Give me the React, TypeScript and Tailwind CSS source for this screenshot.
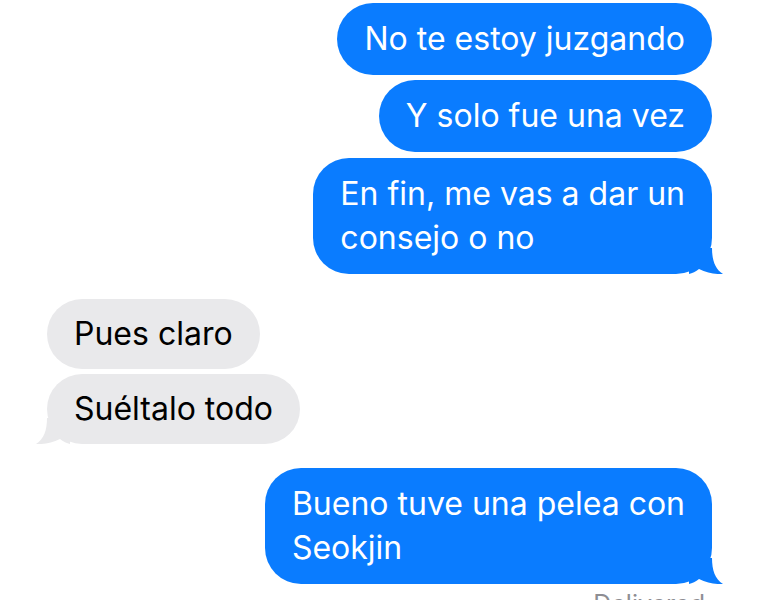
import React from 'react'

type Msg = { id: number; me: boolean; lines: string[]; tail?: boolean; gap?: string }

const MESSAGES: Msg[] = [
  { id: 1, me: true, lines: ['No te estoy juzgando'] },
  { id: 2, me: true, lines: ['Y solo fue una vez'], gap: 'mt-[5px]' },
  { id: 3, me: true, lines: ['En fin, me vas a dar un', 'consejo o no'], tail: true, gap: 'mt-[6px]' },
  { id: 4, me: false, lines: ['Pues claro'], gap: 'mt-[25px]' },
  { id: 5, me: false, lines: ['Suéltalo todo'], tail: true, gap: 'mt-[5px]' },
  { id: 6, me: true, lines: ['Bueno tuve una pelea con', 'Seokjin'], tail: true, gap: 'mt-[24px]' },
]

function Tail({ me }: { me: boolean }) {
  return (
    <svg
      width="34"
      height="26"
      viewBox="0 0 34 26"
      className={`absolute bottom-0 ${me ? 'right-[-11px] text-[#0a7cff]' : 'left-[-11px] -scale-x-100 text-[#e9e9eb]'}`}
    >
      <path
        d="M0 0 H23 C23 12 26 21 34 26 C27 26.5 18 25 10 21 C7 23.5 3 25.5 0 26 Z"
        fill="currentColor"
      />
    </svg>
  )
}

function Bubble({ msg }: { msg: Msg }) {
  return (
    <div className={`flex ${msg.me ? 'justify-end' : 'justify-start'} ${msg.gap ?? ''}`}>
      <div
        className={`relative rounded-[36px] px-[27px] text-[32px] leading-[44px] ${
          msg.me ? 'bg-[#0a7cff] text-white py-[14px]' : 'bg-[#e9e9eb] text-black py-[13px]'
        }`}
      >
        {msg.lines.map((l) => (
          <span key={l} className="relative z-10 block whitespace-nowrap">
            {l}
          </span>
        ))}
        {msg.tail && <Tail me={msg.me} />}
      </div>
    </div>
  )
}

export default function App() {
  return (
    <div className="w-[760px] h-[600px] overflow-hidden bg-white" style={{ fontFamily: 'Inter, "Noto Sans", sans-serif' }}>
      <div className="flex flex-col pl-[47px] pr-[48px] pt-[3px]">
        {MESSAGES.map((m) => (
          <Bubble key={m.id} msg={m} />
        ))}
        <div className="mt-[5px] pr-[7px] text-right text-[25px] leading-[30px] text-[#8e8e93]">Delivered</div>
      </div>
    </div>
  )
}
